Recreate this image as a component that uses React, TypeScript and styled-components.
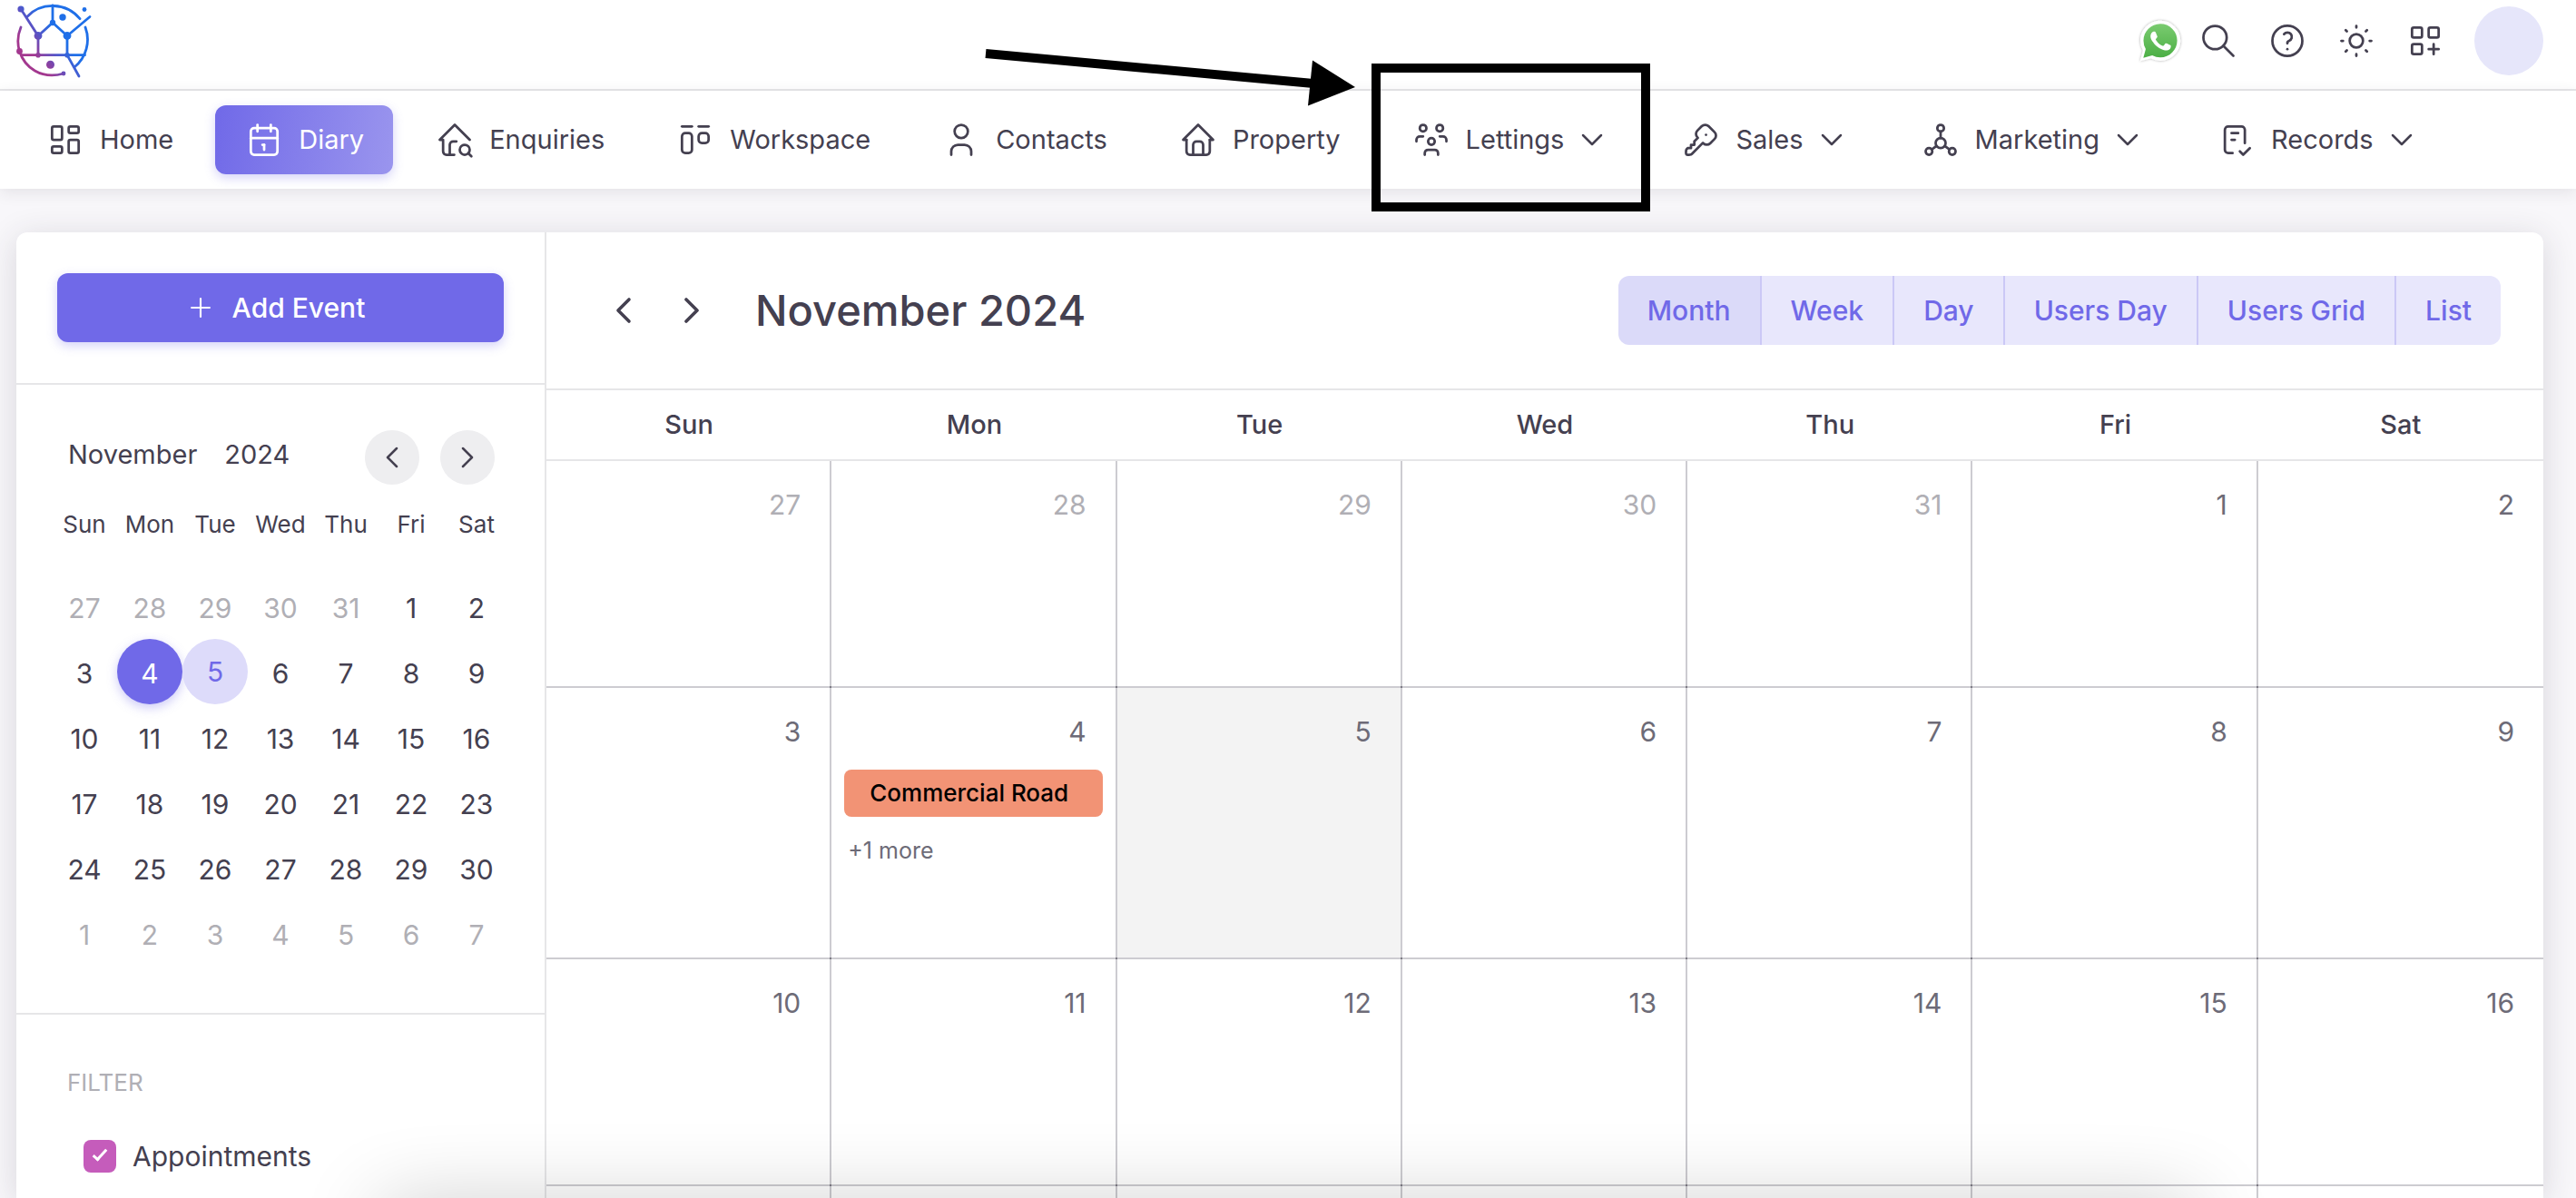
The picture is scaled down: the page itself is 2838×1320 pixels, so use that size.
import React from "react";
import styled, { createGlobalStyle, css } from "styled-components";
import {
  TbSearch,
  TbHelp,
  TbSun,
  TbLayoutGridAdd,
  TbLayoutDashboard,
  TbCalendar,
  TbHomeSearch,
  TbLayoutKanban,
  TbUser,
  TbHome,
  TbUsersGroup,
  TbKey,
  TbSocial,
  TbChecklist,
  TbChevronDown,
  TbChevronLeft,
  TbChevronRight,
  TbPlus,
} from "react-icons/tb";

const ink = "#444050";
const soft = "#6d6b77";
const faded = "#b0afb5";
const line = "#e6e6e8";
const gridLine = "#cdccd1";
const primary = "#7069e8";

const Global = createGlobalStyle`
  *, *::before, *::after { box-sizing: border-box; }
  body {
    margin: 0;
    background: #f8f7fa;
    color: ${ink};
    font-family: Inter, "Liberation Sans", sans-serif;
    font-size: 29px;
    line-height: 44px;
  }
  button, input { font: inherit; color: inherit; }
  button { border: 0; padding: 0; background: none; cursor: pointer; }
  a { color: inherit; text-decoration: none; }
  svg { display: block; flex: none; }
`;

const Page = styled.div`
  height: 100vh;
  display: flex;
  flex-direction: column;
  overflow: hidden;
`;

const TopBar = styled.header`
  display: flex;
  align-items: center;
  justify-content: space-between;
  height: 100px;
  padding: 0 36px 8px 18px;
  background: #fff;
  border-bottom: 2px solid ${line};
`;

const Tools = styled.div`
  display: flex;
  align-items: center;
`;

const ToolButton = styled.button<{ $narrow?: boolean }>`
  display: grid;
  place-items: center;
  width: ${(p) => (p.$narrow ? 52 : 76)}px;
  height: 76px;
`;

const Avatar = styled.button`
  width: 76px;
  height: 76px;
  margin-left: 16px;
  border-radius: 50%;
  background: #e6e6fa;
`;

const NavBar = styled.nav`
  position: relative;
  display: flex;
  align-items: center;
  gap: 14px;
  height: 108px;
  padding: 0 18px;
  background: #fff;
  box-shadow: 0 4px 16px rgba(47, 43, 61, 0.1);
`;

const NavItem = styled.a<{ $active?: boolean }>`
  position: relative;
  display: flex;
  align-items: center;
  gap: 16px;
  height: 76px;
  padding: 0 32px;
  border-radius: 12px;
  white-space: nowrap;
  ${(p) =>
    p.$active &&
    css`
      color: #fff;
      background: linear-gradient(100deg, #7069e8, #9a95ee);
      box-shadow: 0 4px 12px rgba(112, 105, 232, 0.3);
    `}
`;

const Caret = styled(TbChevronDown)`
  margin-left: -5px;
`;

const Frame = styled.span`
  position: absolute;
  inset: -46px -12px -41px;
  border: 10px solid #000;
  pointer-events: none;
`;

const Arrow = styled.svg`
  position: absolute;
  right: calc(100% + 28px);
  top: -66px;
  z-index: 1;
  pointer-events: none;
`;

const Card = styled.main`
  flex: 1;
  min-height: 0;
  display: flex;
  margin: 48px 36px 0 18px;
  border-radius: 12px 12px 0 0;
  background: #fff;
  box-shadow: 0 6px 36px rgba(47, 43, 61, 0.16);
`;

const Sidebar = styled.aside`
  flex: 0 0 584px;
  border-right: 2px solid ${line};
  overflow: hidden;
`;

const AddSection = styled.div`
  padding: 45px;
  border-bottom: 2px solid ${line};
`;

const AddButton = styled.button`
  display: flex;
  align-items: center;
  justify-content: center;
  gap: 18px;
  width: 100%;
  height: 76px;
  padding-right: 12px;
  border-radius: 12px;
  background: ${primary};
  color: #fff;
  font-size: 30px;
  font-weight: 500;
  box-shadow: 0 4px 12px rgba(112, 105, 232, 0.3);
`;

const MiniSection = styled.section`
  padding: 50px 39px 52px;
  border-bottom: 2px solid ${line};
`;

const MiniHead = styled.div`
  display: flex;
  align-items: center;
  gap: 23px;
  height: 60px;
  padding: 0 16px 0 18px;
`;

const MiniMonth = styled.div`
  flex: 1;
  display: flex;
  gap: 30px;
  padding-bottom: 6px;
`;

const RoundButton = styled.button`
  display: grid;
  place-items: center;
  width: 60px;
  height: 60px;
  border-radius: 50%;
  background: #eeeef0;
`;

const MiniTable = styled.table`
  width: 100%;
  table-layout: fixed;
  border-collapse: collapse;
  text-align: center;

  th {
    height: 98px;
    padding: 22px 0 32px;
    font-size: 26px;
    font-weight: 400;
  }
  td {
    padding: 0;
  }
`;

const DayButton = styled.button<{ $muted?: boolean; $tone?: string }>`
  width: 72px;
  height: 72px;
  padding-top: ${(p) => (p.$tone === "today" ? 0 : 3)}px;
  border-radius: 50%;
  font-size: 30px;
  vertical-align: top;
  color: ${(p) => (p.$muted ? faded : ink)};
  ${(p) =>
    p.$tone === "selected" &&
    css`
      color: #fff;
      background: ${primary};
      box-shadow: 0 4px 12px rgba(112, 105, 232, 0.35);
    `}
  ${(p) =>
    p.$tone === "today" &&
    css`
      color: ${primary};
      background: #dddbfa;
    `}
`;

const FilterSection = styled.section`
  padding: 53px 56px;
`;

const FilterTitle = styled.h2`
  margin: 0;
  font-size: 26px;
  font-weight: 400;
  color: ${faded};
`;

const Check = styled.label`
  display: flex;
  align-items: center;
  gap: 18px;
  margin: 37px 0 0 18px;
  font-size: 30px;
`;

const CheckBox = styled.input`
  appearance: none;
  display: grid;
  place-items: center;
  width: 36px;
  height: 36px;
  margin: 0;
  border-radius: 8px;
  background: #c55cbb;

  &:checked::after {
    content: "";
    width: 8px;
    height: 16px;
    margin-top: -6px;
    border: solid #fff;
    border-width: 0 3px 3px 0;
    transform: rotate(42deg);
  }
`;

const Calendar = styled.section`
  flex: 1;
  min-width: 0;
  display: flex;
  flex-direction: column;
  overflow: hidden;
`;

const CalHead = styled.div`
  flex: none;
  display: flex;
  align-items: center;
  justify-content: space-between;
  height: 172px;
  padding: 0 47px;
`;

const CalTitle = styled.div`
  display: flex;
  align-items: center;

  h1 {
    margin: 0 0 0 33px;
    font-size: 47px;
    font-weight: 500;
    line-height: 64px;
  }
`;

const ArrowButton = styled.button`
  display: grid;
  place-items: center;
  width: 75px;
  height: 64px;
`;

const Views = styled.div`
  display: flex;
  border-radius: 12px;
  overflow: hidden;
`;

const ViewButton = styled.button<{ $active?: boolean }>`
  height: 76px;
  padding: 0 32px;
  font-size: 30px;
  font-weight: 500;
  color: ${primary};
  background: ${(p) => (p.$active ? "#dbdaf9" : "#e8e7fc")};

  & + & {
    border-left: 2px solid #cbc8f6;
  }
`;

const Month = styled.table`
  width: 100%;
  table-layout: fixed;
  border-spacing: 0;

  th {
    height: 80px;
    padding: 0;
    border-top: 2px solid ${line};
    border-bottom: 2px solid ${line};
    font-weight: 500;
  }
`;

const Cell = styled.td<{ $height: number; $today?: boolean }>`
  position: relative;
  height: ${(p) => p.$height}px;
  padding: 26px 14px 0;
  vertical-align: top;
  border-bottom: 2px solid ${gridLine};
  background: ${(p) => (p.$today ? "#f3f3f3" : "#fff")};

  &:not(:last-child) {
    border-right: 2px solid ${gridLine};
  }
  &:not(:last-child)::after {
    content: "";
    position: absolute;
    right: -2px;
    bottom: -2px;
    width: 2px;
    height: 2px;
    background: #7d7b85;
  }
`;

const DateText = styled.div<{ $muted?: boolean }>`
  padding-right: 18px;
  text-align: right;
  font-size: 30px;
  color: ${(p) => (p.$muted ? faded : soft)};
`;

const Event = styled.button`
  display: block;
  width: 100%;
  height: 52px;
  margin-top: 20px;
  padding: 0 28px;
  border-radius: 8px;
  background: #f29375;
  color: #000;
  font-size: 26px;
  font-weight: 500;
  line-height: 50px;
  text-align: left;
`;

const More = styled.a`
  display: block;
  margin-top: 15px;
  padding-left: 4px;
  font-size: 25px;
  color: ${soft};
`;

const DockShade = styled.div`
  position: fixed;
  left: 420px;
  right: 420px;
  bottom: -70px;
  height: 60px;
  box-shadow: 0 0 90px rgba(0, 0, 0, 0.24);
  pointer-events: none;
`;

const Logo = () => (
  <svg width="84" height="84" viewBox="18 3 84 84" fill="none" stroke="url(#brand)" strokeWidth="2.8" strokeLinecap="round" role="img" aria-label="Logo">
    <defs>
      <linearGradient id="brand" gradientUnits="userSpaceOnUse" x1="38" y1="62" x2="66" y2="40">
        <stop offset="0" stopColor="#a3388f" />
        <stop offset="0.5" stopColor="#5a52c4" />
        <stop offset="1" stopColor="#1f6fe8" />
      </linearGradient>
    </defs>
    <path d="M23 10 42 39.5 58 25 74 39.5 99 18.5M58 6v19M42 39.5v21.2M74 39.5v21.2L87 84M23.5 60.7h70" />
    <path d="M29.5 18.7A39 39 0 0 1 88 20.7M94 30A39 39 0 0 1 82 74M23 30A39 39 0 0 0 21.5 56.5C27 74 45 88 70 81" />
    <g fill="url(#brand)" stroke="none">
      <circle cx="23" cy="10" r="3.6" />
      <circle cx="58" cy="25" r="3.2" />
      <circle cx="42" cy="39.5" r="4.4" />
      <circle cx="74" cy="39.5" r="4.4" />
      <circle cx="69" cy="19" r="3.7" />
      <circle cx="93" cy="10.5" r="2.4" />
      <circle cx="21.5" cy="56.5" r="3.4" />
      <circle cx="42" cy="60.7" r="2.8" />
      <circle cx="74" cy="60.7" r="2.8" />
      <circle cx="70" cy="81" r="2.4" />
      <circle cx="55.5" cy="71.3" r="4.5" />
    </g>
  </svg>
);

const bubble =
  "M.057 24l1.687-6.163a11.867 11.867 0 01-1.587-5.946C.16 5.335 5.495 0 12.05 0a11.817 11.817 0 018.413 3.488 11.824 11.824 0 013.48 8.414c-.003 6.557-5.338 11.892-11.893 11.892a11.9 11.9 0 01-5.688-1.448z";

const WhatsAppIcon = () => (
  <svg width="52" height="52" viewBox="-2 -2 28 28">
    <defs>
      <linearGradient id="wa" x1="0" y1="0" x2="0" y2="1">
        <stop offset="0" stopColor="#7acb70" />
        <stop offset="1" stopColor="#4caf45" />
      </linearGradient>
      <filter id="waShade" x="-20%" y="-20%" width="140%" height="140%">
        <feDropShadow dx="0" dy="0" stdDeviation="0.8" floodOpacity="0.35" />
      </filter>
    </defs>
    <path d={bubble} fill="#fff" filter="url(#waShade)" />
    <path d={bubble} fill="url(#wa)" transform="translate(1.9 1.9) scale(.84)" />
    <path
      transform="translate(.2 .1)"
      fill="#fff"
      d="M17.472 14.382c-.297-.149-1.758-.867-2.03-.967-.273-.099-.471-.148-.67.15-.197.297-.767.966-.94 1.164-.173.199-.347.223-.644.075-.297-.15-1.255-.463-2.39-1.475-.883-.788-1.48-1.761-1.653-2.059-.173-.297-.018-.458.13-.606.134-.133.298-.347.446-.52.149-.174.198-.298.298-.497.099-.198.05-.371-.025-.52-.075-.149-.669-1.612-.916-2.207-.242-.579-.487-.5-.669-.51-.173-.008-.371-.01-.57-.01-.198 0-.52.074-.792.372-.272.297-1.04 1.016-1.04 2.479 0 1.462 1.065 2.875 1.213 3.074.149.198 2.096 3.2 5.077 4.487.709.306 1.262.489 1.694.625.712.227 1.36.195 1.871.118.571-.085 1.758-.719 2.006-1.413.248-.694.248-1.289.173-1.413-.074-.124-.272-.198-.57-.347z"
    />
  </svg>
);

const tools = [
  { label: "Search", Icon: TbSearch },
  { label: "Help", Icon: TbHelp },
  { label: "Theme", Icon: TbSun },
  { label: "Shortcuts", Icon: TbLayoutGridAdd },
];

const nav = [
  { label: "Home", Icon: TbLayoutDashboard },
  { label: "Diary", Icon: TbCalendar, active: true },
  { label: "Enquiries", Icon: TbHomeSearch },
  { label: "Workspace", Icon: TbLayoutKanban },
  { label: "Contacts", Icon: TbUser },
  { label: "Property", Icon: TbHome },
  { label: "Lettings", Icon: TbUsersGroup, menu: true, marked: true },
  { label: "Sales", Icon: TbKey, menu: true },
  { label: "Marketing", Icon: TbSocial, menu: true },
  { label: "Records", Icon: TbChecklist, menu: true },
];

const weekdays = ["Sun", "Mon", "Tue", "Wed", "Thu", "Fri", "Sat"];
const views = ["Month", "Week", "Day", "Users Day", "Users Grid", "List"];

// Six weeks starting on Sunday 27 October 2024.
const days = Array.from({ length: 42 }, (_, i) => {
  const date = new Date(2024, 9, 27 + i);
  return { day: date.getDate(), muted: date.getMonth() !== 10 };
});
const weeks = Array.from({ length: 6 }, (_, w) => days.slice(w * 7, w * 7 + 7));
const rowHeights = [250, 299, 250];

export default function App() {
  return (
    <Page>
      <Global />
      <TopBar>
        <a href="#home">
          <Logo />
        </a>
        <Tools>
          <ToolButton $narrow aria-label="WhatsApp">
            <WhatsAppIcon />
          </ToolButton>
          {tools.map(({ label, Icon }) => (
            <ToolButton key={label} aria-label={label}>
              <Icon size={44} strokeWidth={1.5} />
            </ToolButton>
          ))}
          <Avatar aria-label="Account" />
        </Tools>
      </TopBar>

      <NavBar>
        {nav.map(({ label, Icon, active, menu, marked }) => (
          <NavItem key={label} href={"#" + label.toLowerCase()} $active={active}>
            <Icon size={44} strokeWidth={1.5} />
            {label}
            {menu && <Caret size={40} strokeWidth={1.5} />}
            {marked && (
              <>
                <Arrow width="412" height="70" viewBox="0 0 412 70">
                  <path d="M3 9 364 42" stroke="#000" strokeWidth="10" />
                  <path d="M363 16.500 410 46 358 66.500z" />
                </Arrow>
                <Frame />
              </>
            )}
          </NavItem>
        ))}
      </NavBar>

      <Card>
        <Sidebar>
          <AddSection>
            <AddButton>
              <TbPlus size={34} strokeWidth={1.5} />
              Add Event
            </AddButton>
          </AddSection>
          <MiniSection>
            <MiniHead>
              <MiniMonth>
                <span>November</span>
                <span>2024</span>
              </MiniMonth>
              <RoundButton aria-label="Previous month">
                <TbChevronLeft size={40} strokeWidth={1.5} />
              </RoundButton>
              <RoundButton aria-label="Next month">
                <TbChevronRight size={40} strokeWidth={1.5} />
              </RoundButton>
            </MiniHead>
            <MiniTable>
              <thead>
                <tr>
                  {weekdays.map((d) => (
                    <th key={d}>{d}</th>
                  ))}
                </tr>
              </thead>
              <tbody>
                {weeks.map((week, w) => (
                  <tr key={w}>
                    {week.map(({ day, muted }) => (
                      <td key={day}>
                        <DayButton
                          $muted={muted}
                          $tone={muted ? undefined : day === 4 ? "selected" : day === 5 ? "today" : undefined}
                        >
                          {day}
                        </DayButton>
                      </td>
                    ))}
                  </tr>
                ))}
              </tbody>
            </MiniTable>
          </MiniSection>
          <FilterSection>
            <FilterTitle>FILTER</FilterTitle>
            <Check>
              <CheckBox type="checkbox" defaultChecked />
              Appointments
            </Check>
          </FilterSection>
        </Sidebar>

        <Calendar>
          <CalHead>
            <CalTitle>
              <ArrowButton aria-label="Previous">
                <TbChevronLeft size={48} strokeWidth={1.8} />
              </ArrowButton>
              <ArrowButton aria-label="Next">
                <TbChevronRight size={48} strokeWidth={1.8} />
              </ArrowButton>
              <h1>November 2024</h1>
            </CalTitle>
            <Views>
              {views.map((v) => (
                <ViewButton key={v} $active={v === "Month"}>
                  {v}
                </ViewButton>
              ))}
            </Views>
          </CalHead>
          <Month>
            <thead>
              <tr>
                {weekdays.map((d) => (
                  <th key={d}>{d}</th>
                ))}
              </tr>
            </thead>
            <tbody>
              {rowHeights.map((height, w) => (
                <tr key={w}>
                  {weeks[w].map(({ day, muted }) => (
                    <Cell key={day} $height={height} $today={!muted && day === 5}>
                      <DateText $muted={muted}>{day}</DateText>
                      {day === 4 && (
                        <>
                          <Event>Commercial Road</Event>
                          <More href="#more">+1 more</More>
                        </>
                      )}
                    </Cell>
                  ))}
                </tr>
              ))}
              <tr>
                {weekdays.map((d) => (
                  <Cell key={d} $height={250} />
                ))}
              </tr>
            </tbody>
          </Month>
        </Calendar>
      </Card>
      <DockShade />
    </Page>
  );
}
